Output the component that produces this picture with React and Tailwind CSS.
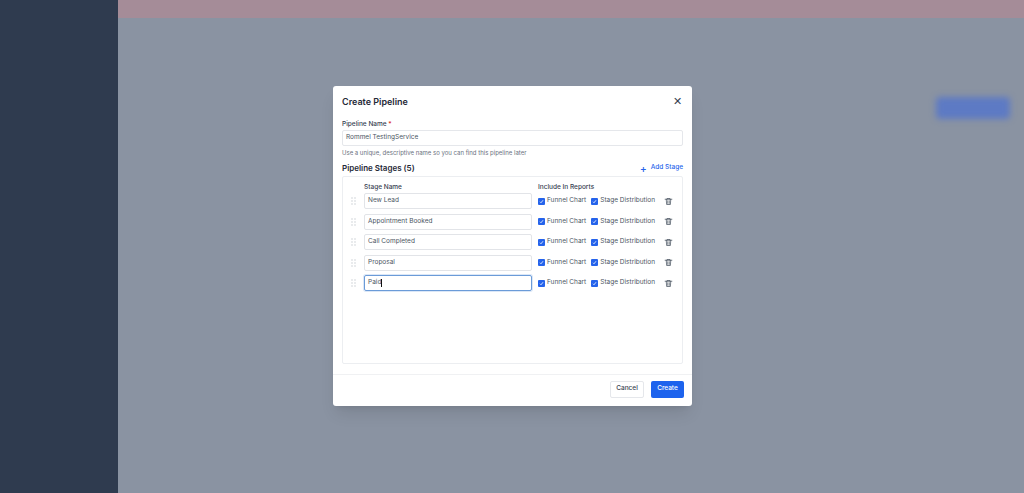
import React from "react";

const stages = ["New Lead", "Appointment Booked", "Call Completed", "Proposal", "Paid"];

function Check() {
  return (
    <span className="w-[7px] h-[7px] rounded-[1px] bg-[#2563eb] flex items-center justify-center shrink-0">
      <svg width="5" height="5" viewBox="0 0 10 10"><path d="M2 5.5l2 2 4-5" stroke="white" strokeWidth="1.6" fill="none" /></svg>
    </span>
  );
}

function Trash() {
  return (
    <svg width="9" height="9" viewBox="0 0 24 24" fill="none" stroke="#4b5563" strokeWidth="2" strokeLinecap="round">
      <path d="M3 6h18M8 6V4h8v2M6 6l1 14h10l1-14M10 10v7M14 10v7" />
    </svg>
  );
}

function Grip() {
  return (
    <svg width="5" height="8" viewBox="0 0 5 8" fill="#c3c7ce">
      <circle cx="1" cy="1" r="0.7" /><circle cx="4" cy="1" r="0.7" />
      <circle cx="1" cy="4" r="0.7" /><circle cx="4" cy="4" r="0.7" />
      <circle cx="1" cy="7" r="0.7" /><circle cx="4" cy="7" r="0.7" />
    </svg>
  );
}

export default function App() {
  return (
    <div className="relative w-[1024px] h-[493px] overflow-hidden bg-[#8b93a1]" style={{ fontFamily: "Inter, 'Liberation Sans', sans-serif" }}>
      <div className="absolute inset-0 flex">
        <div className="w-[118px] h-full bg-[#2f3b4f]" />
        <div className="flex-1 flex flex-col">
          <div className="h-[18px] bg-[#a58c98]" />
          <div className="flex-1 bg-[#8a93a2]" />
        </div>
      </div>
      <div className="absolute left-[936px] top-[97px] w-[74px] h-[22px] rounded bg-[#5d7ac4] blur-[3px]" />
      <div className="absolute left-[333px] top-[86px] w-[359px] h-[320px] bg-white rounded-[3px] shadow-lg flex flex-col text-[#374151]">
        <div className="flex items-center justify-between px-[9px] pt-[9px]">
          <span className="text-[9px] font-semibold text-[#1f2937]">Create Pipeline</span>
          <span className="text-[11px] leading-none text-[#374151] mr-[1px]">✕</span>
        </div>
        <div className="px-[9px] mt-[11px]">
          <div className="text-[6.5px] leading-[9px] font-medium text-[#374151]">Pipeline Name <span className="text-[#dc2626]">*</span></div>
          <div className="mt-[1px] h-[16px] border border-[#e5e7eb] rounded-[2px] px-[3px] flex items-center text-[6.5px] text-[#4b5563]">Rommel TestingService</div>
          <div className="mt-[2px] text-[6px] leading-[9px] text-[#6b7280]">Use a unique, descriptive name so you can find this pipeline later</div>
          <div className="mt-[5px] flex items-center justify-between">
            <span className="text-[8px] font-semibold text-[#1f2937]">Pipeline Stages (5)</span>
            <span className="text-[6.5px] font-medium text-[#2563eb] flex items-center gap-[4px] leading-none"><span className="text-[10px] leading-none">+</span>Add Stage</span>
          </div>
          <div className="mt-[2px] h-[188px] border border-[#eceef1] rounded-[2px] px-[8px] pt-[6px]">
            <div className="flex text-[6.5px] font-medium text-[#374151] pl-[13px]">
              <span className="w-[174px]">Stage Name</span>
              <span>Include In Reports</span>
            </div>
            <div className="mt-[1px] flex flex-col gap-[4.5px]">
              {stages.map((s, i) => (
                <div key={s} className="flex items-center h-[16px]">
                  <span className="w-[13px] flex"><Grip /></span>
                  <div className={"w-[168px] h-[16px] rounded-[2px] flex items-center px-[3px] text-[6.5px] text-[#4b5563] " + (i === 4 ? "border border-[#6b9bd8] ring-1 ring-[#dbe7f7]" : "border border-[#e2e4e8]")}>{s}{i === 4 && <span className="w-px h-[8px] bg-[#111]" />}</div>
                  <div className="ml-[6px] flex items-center gap-[2px] text-[6.5px] text-[#4b5563]"><Check />Funnel Chart</div>
                  <div className="ml-[5px] flex items-center gap-[2px] text-[6.5px] text-[#4b5563]"><Check />Stage Distribution</div>
                  <span className="ml-[9px] flex"><Trash /></span>
                </div>
              ))}
            </div>
          </div>
        </div>
        <div className="mt-[10px] border-t border-[#f0f1f3] flex justify-end gap-[7px] px-[8px] pt-[6px]">
          <span className="w-[34px] h-[17px] border border-[#e5e7eb] rounded-[2px] flex items-center justify-center text-[6.5px] font-medium text-[#374151]">Cancel</span>
          <span className="w-[33px] h-[17px] bg-[#1d63ed] rounded-[2px] flex items-center justify-center text-[6.5px] font-medium text-white">Create</span>
        </div>
      </div>
    </div>
  );
}
